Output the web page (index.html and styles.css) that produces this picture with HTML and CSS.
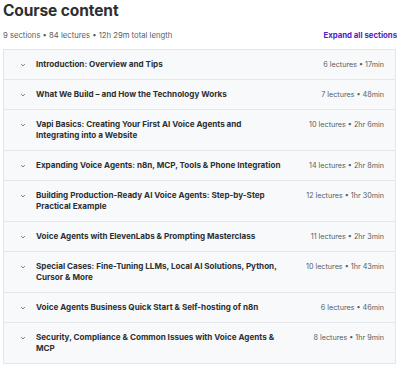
FILE: index.html
```html
<!DOCTYPE html>
<html>
<head>
<meta charset="utf-8">
<link rel="stylesheet" href="styles.css">
</head>
<body>
<div class="page">
  <h2 class="title">Course content</h2>
  <div class="meta">
    <span>9 sections • 84 lectures • 12h 29m total length</span>
    <span class="expand">Expand all sections</span>
  </div>
  <div class="sections">
    <div class="row"><span class="chev"><svg viewBox="0 0 10 10" width="6" height="6"><path d="M2 3.5 L5 6.5 L8 3.5" fill="none" stroke="#2d2f31" stroke-width="1.1"/></svg></span><span class="name">Introduction: Overview and Tips</span><span class="info">6 lectures • 17min</span></div>
    <div class="row"><span class="chev"><svg viewBox="0 0 10 10" width="6" height="6"><path d="M2 3.5 L5 6.5 L8 3.5" fill="none" stroke="#2d2f31" stroke-width="1.1"/></svg></span><span class="name">What We Build – and How the Technology Works</span><span class="info">7 lectures • 48min</span></div>
    <div class="row"><span class="chev"><svg viewBox="0 0 10 10" width="6" height="6"><path d="M2 3.5 L5 6.5 L8 3.5" fill="none" stroke="#2d2f31" stroke-width="1.1"/></svg></span><span class="name">Vapi Basics: Creating Your First AI Voice Agents and<br>Integrating into a Website</span><span class="info">10 lectures • 2hr 6min</span></div>
    <div class="row"><span class="chev"><svg viewBox="0 0 10 10" width="6" height="6"><path d="M2 3.5 L5 6.5 L8 3.5" fill="none" stroke="#2d2f31" stroke-width="1.1"/></svg></span><span class="name">Expanding Voice Agents: n8n, MCP, Tools &amp; Phone Integration</span><span class="info">14 lectures • 2hr 8min</span></div>
    <div class="row"><span class="chev"><svg viewBox="0 0 10 10" width="6" height="6"><path d="M2 3.5 L5 6.5 L8 3.5" fill="none" stroke="#2d2f31" stroke-width="1.1"/></svg></span><span class="name">Building Production-Ready AI Voice Agents: Step-by-Step<br>Practical Example</span><span class="info">12 lectures • 1hr 30min</span></div>
    <div class="row"><span class="chev"><svg viewBox="0 0 10 10" width="6" height="6"><path d="M2 3.5 L5 6.5 L8 3.5" fill="none" stroke="#2d2f31" stroke-width="1.1"/></svg></span><span class="name">Voice Agents with ElevenLabs &amp; Prompting Masterclass</span><span class="info">11 lectures • 2hr 3min</span></div>
    <div class="row"><span class="chev"><svg viewBox="0 0 10 10" width="6" height="6"><path d="M2 3.5 L5 6.5 L8 3.5" fill="none" stroke="#2d2f31" stroke-width="1.1"/></svg></span><span class="name">Special Cases: Fine-Tuning LLMs, Local AI Solutions, Python,<br>Cursor &amp; More</span><span class="info">10 lectures • 1hr 43min</span></div>
    <div class="row"><span class="chev"><svg viewBox="0 0 10 10" width="6" height="6"><path d="M2 3.5 L5 6.5 L8 3.5" fill="none" stroke="#2d2f31" stroke-width="1.1"/></svg></span><span class="name">Voice Agents Business Quick Start &amp; Self-hosting of n8n</span><span class="info">6 lectures • 46min</span></div>
    <div class="row"><span class="chev"><svg viewBox="0 0 10 10" width="6" height="6"><path d="M2 3.5 L5 6.5 L8 3.5" fill="none" stroke="#2d2f31" stroke-width="1.1"/></svg></span><span class="name">Security, Compliance &amp; Common Issues with Voice Agents &amp;<br>MCP</span><span class="info">8 lectures • 1hr 9min</span></div>
  </div>
</div>
</body>
</html>
```

FILE: styles.css
```css
* { box-sizing: border-box; }
html, body { margin: 0; padding: 0; background: #fff; }
body { font-family: Inter, "Liberation Sans", sans-serif; color: #2d2f31; }
.page { padding: 2px 3px 0 3px; }
.title {
  margin: 0;
  font-size: 15.5px;
  font-weight: 700;
  line-height: 17px;
  letter-spacing: -0.1px;
}
.meta {
  display: flex;
  justify-content: space-between;
  align-items: center;
  margin-top: 11px;
  height: 10px;
  font-size: 7.7px;
  color: #595c5f;
}
.expand { color: #5022c3; font-weight: 700; font-size: 7.8px; }
.sections {
  margin-top: 9px;
  margin-right: 1px;
  border: 1px solid #e4e6ea;
  border-bottom: none;
}
.row {
  display: flex;
  align-items: flex-start;
  background: #f7f9fa;
  border-bottom: 1px solid #e4e6ea;
  padding: 9px 11px 9px 15px;
  line-height: 11px;
}
.chev { width: 17px; flex: none; display: flex; align-items: center; height: 11px; padding-left: 1px; }
.name { flex: 1; font-size: 8.1px; font-weight: 700; color: #2d2f31; white-space: nowrap; }
.info { flex: none; font-size: 7.2px; color: #595c5f; text-align: right; }
```
